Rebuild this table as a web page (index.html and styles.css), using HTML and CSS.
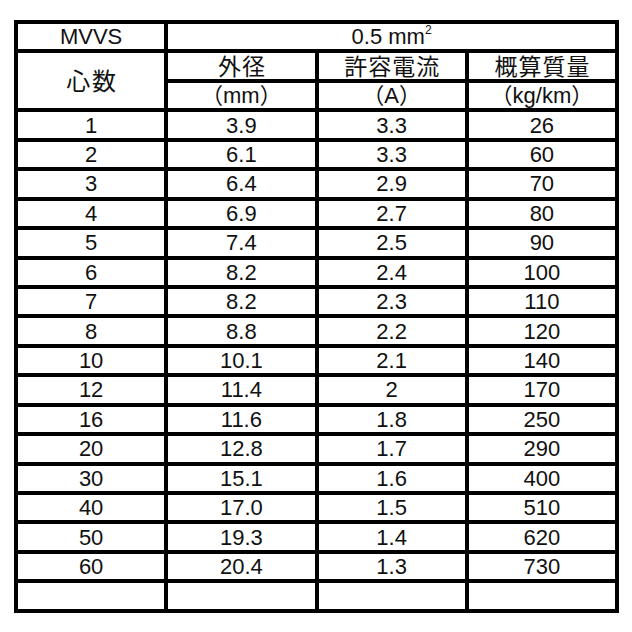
FILE: index.html
```html
<!DOCTYPE html>
<html lang="ja">
<head>
<meta charset="utf-8">
<link rel="stylesheet" href="styles.css">
</head>
<body>
<table class="spec">
  <tbody>
    <tr>
      <td>MVVS</td>
      <td colspan="3">0.5 mm<sup>2</sup></td>
    </tr>
    <tr>
      <td rowspan="2" class="jp wide">心数</td>
      <td class="jp">外径</td>
      <td class="jp">許容電流</td>
      <td class="jp">概算質量</td>
    </tr>
    <tr>
      <td class="unit">（mm）</td>
      <td class="unit">（A）</td>
      <td class="unit">（kg/km）</td>
    </tr>
    <tr><td>1</td><td>3.9</td><td>3.3</td><td>26</td></tr>
    <tr><td>2</td><td>6.1</td><td>3.3</td><td>60</td></tr>
    <tr><td>3</td><td>6.4</td><td>2.9</td><td>70</td></tr>
    <tr><td>4</td><td>6.9</td><td>2.7</td><td>80</td></tr>
    <tr><td>5</td><td>7.4</td><td>2.5</td><td>90</td></tr>
    <tr><td>6</td><td>8.2</td><td>2.4</td><td>100</td></tr>
    <tr><td>7</td><td>8.2</td><td>2.3</td><td>110</td></tr>
    <tr><td>8</td><td>8.8</td><td>2.2</td><td>120</td></tr>
    <tr><td>10</td><td>10.1</td><td>2.1</td><td>140</td></tr>
    <tr><td>12</td><td>11.4</td><td>2</td><td>170</td></tr>
    <tr><td>16</td><td>11.6</td><td>1.8</td><td>250</td></tr>
    <tr><td>20</td><td>12.8</td><td>1.7</td><td>290</td></tr>
    <tr><td>30</td><td>15.1</td><td>1.6</td><td>400</td></tr>
    <tr><td>40</td><td>17.0</td><td>1.5</td><td>510</td></tr>
    <tr><td>50</td><td>19.3</td><td>1.4</td><td>620</td></tr>
    <tr><td>60</td><td>20.4</td><td>1.3</td><td>730</td></tr>
    <tr><td></td><td></td><td></td><td></td></tr>
  </tbody>
</table>
</body>
</html>
```
FILE: styles.css
```css
html, body {
  margin: 0;
  padding: 0;
  background: #fff;
}
body {
  padding: 20px 0 0 14px;
}
.spec {
  width: 605px;
  table-layout: fixed;
  border-collapse: separate;
  border-spacing: 4px;
  background: #000;
  font-family: "Liberation Sans", "Noto Sans CJK JP", sans-serif;
  font-size: 22px;
  color: #111;
}
.spec tr {
  height: 25.45px;
}
.spec td {
  background: #fff;
  padding: 0;
  height: 25.45px;
  line-height: 25px;
  text-align: center;
  vertical-align: middle;
  white-space: nowrap;
}
.spec .jp {
  font-family: "Noto Sans CJK JP", sans-serif;
  font-size: 23px;
  line-height: 23px;
  padding: 0 0 2px 1px;
  height: 23.45px;
  letter-spacing: 1px;
}
.spec .wide {
  font-size: 24px;
  letter-spacing: 2px;
  padding: 0 0 2px 2px;
}
.spec .unit {
  font-size: 22px;
}
.spec sup {
  font-size: 12px;
  line-height: 0;
  vertical-align: 10px;
}
```
